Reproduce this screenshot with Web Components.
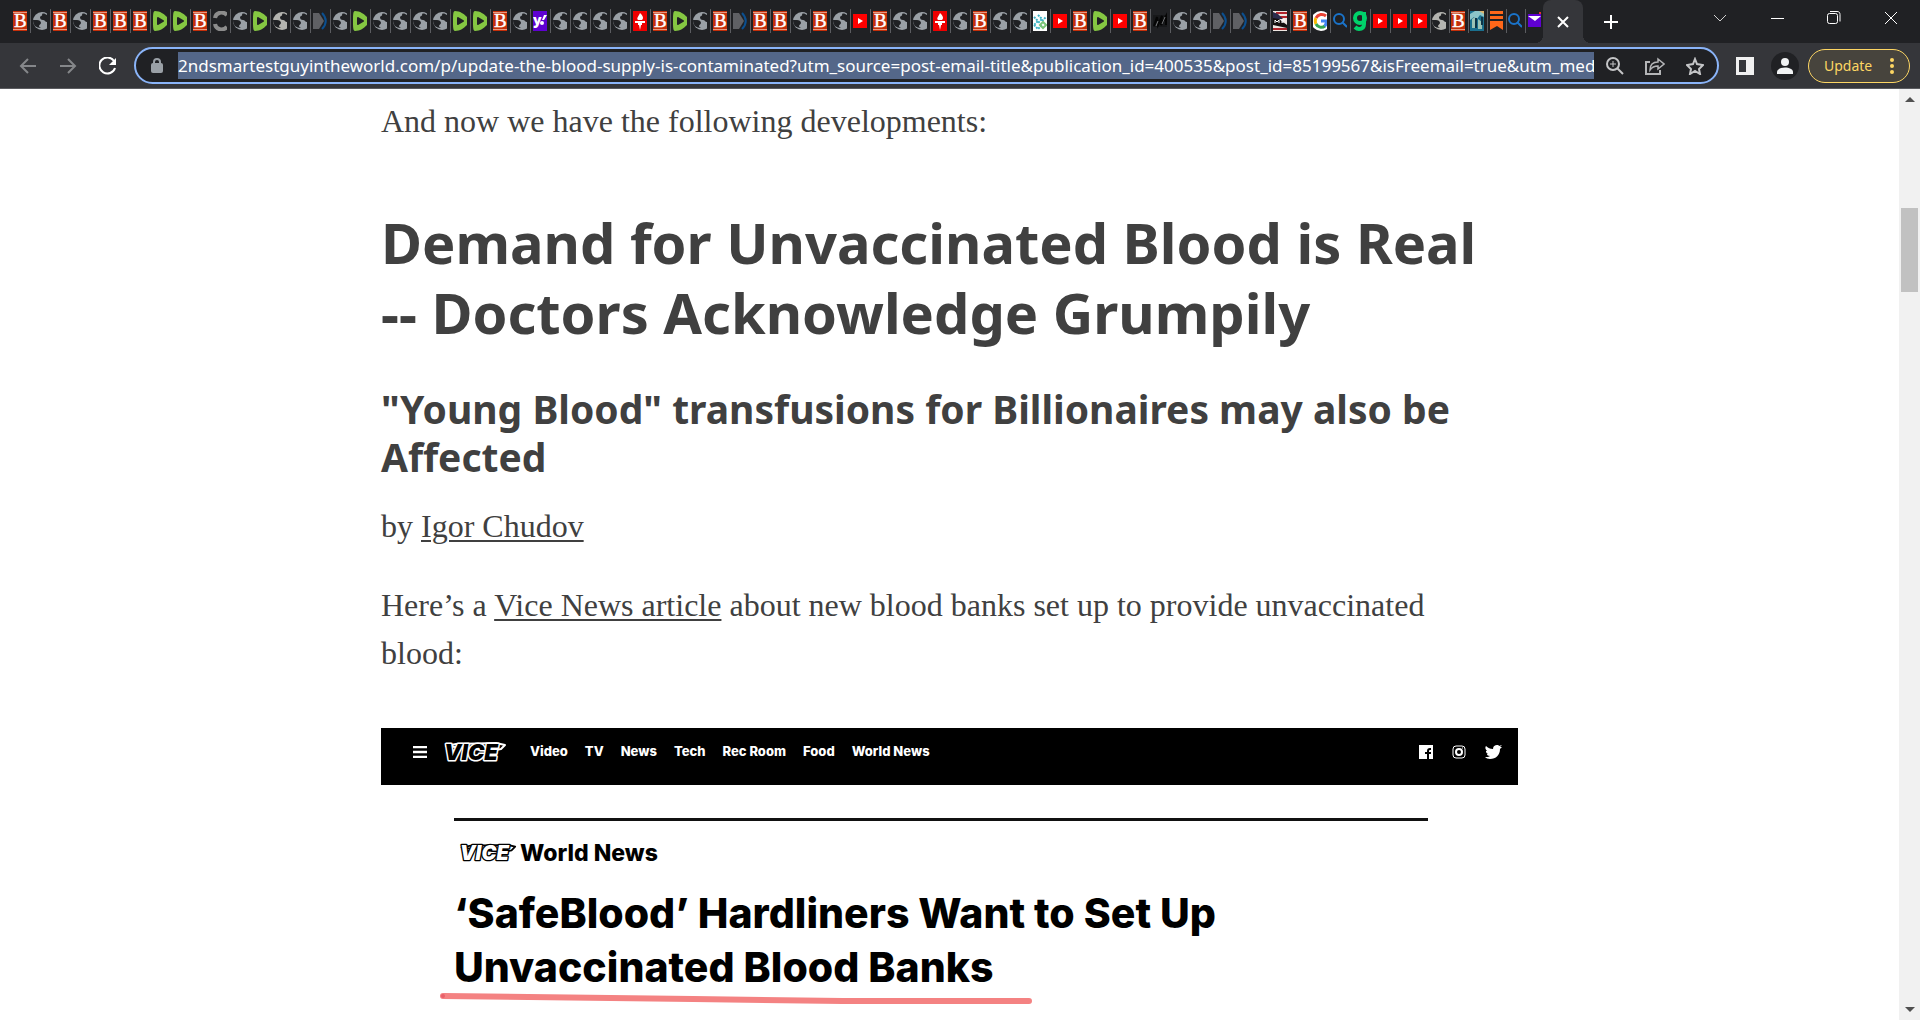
<!DOCTYPE html>
<html lang="en">
<head>
<meta charset="utf-8">
<title>Update: The Blood Supply is Contaminated</title>
<style>
  html, body {
    margin: 0;
    height: 100%;
  }

  body {
    display: flex;
    flex-direction: column;
    overflow: hidden;
    background: #ffffff;
    font-family: 'Noto Sans', sans-serif;
  }

  .viewport {
    display: flex;
    flex: 1;
    min-height: 0;
  }

  .dash {
    white-space: nowrap;
  }
</style>
</head>
<body>
  <tab-strip></tab-strip>
  <nav-toolbar></nav-toolbar>
  <div class="viewport">
    <article-view>
      <p>And now we have the following developments:</p>
      <h1>Demand for Unvaccinated Blood is Real <span class="dash">--</span> Doctors Acknowledge Grumpily</h1>
      <h2>"Young Blood" transfusions for Billionaires may also be Affected</h2>
      <p>by <a href="#igor">Igor Chudov</a></p>
      <p>Here’s a <a href="#vice">Vice News article</a> about new blood banks set up to provide unvaccinated blood:</p>
      <vice-card>‘SafeBlood’ Hardliners Want to Set Up Unvaccinated Blood Banks</vice-card>
    </article-view>
    <page-scrollbar></page-scrollbar>
  </div>

<script>
/**
 * Favicon drawings, all in a 14x20 box since the tabs are too narrow
 * to show the whole icon.
 */
const globe = (color) => `
  <circle cx="9" cy="10" r="9" fill="${color}"/>
  <path d="M0 9h4c2 0 4 1 4 3 0 1-2 2-2 3s1 1 2 2c-5 0-8-3-8-8z" fill="#202124"/>
  <path d="M14 4c-2-1-3-2-5-1 1 2-2 2-2 3 0 2 1 3 3 3s2 2 4 2z" fill="#202124"/>`

const favicons = {
  B: `
    <path d="M0 0h14v20H0z" fill="#c42f0a"/>
    <path d="M0 1.5h14M0 18.5h14" stroke="#e79a80" stroke-width="1"/>
    <text x="1" y="16" font-family="Liberation Serif" font-size="19" fill="#fff" stroke="#fff" stroke-width=".4">B</text>`,
  S: globe('#9aa0a6'),
  L: globe('#b4b4b0'),
  D: `
    <path d="M2 0c5 0 9 3 12 6v8c-3 3-7 6-12 6-2 0-2-4-2-10S0 0 2 0z" fill="#85c742"/>
    <path d="M5 7l5 3-5 3z" fill="#202124" stroke="#202124" stroke-width="2" stroke-linejoin="round"/>`,
  C: `
    <path d="M14 4C10 0 3 1 2 7M14 16c-4 4-11 3-12-3" fill="none" stroke="#8c8c8c" stroke-width="4"/>`,
  P: `
    <path d="M0 2h6l5 8-5 8H0z" fill="#5f6064"/>
    <path d="M9 2c5 5 5 11 0 16" fill="none" stroke="#0b4f8f" stroke-width="2"/>`,
  Y: `
    <path d="M0 0h14v20H0z" fill="#5f01d1"/>
    <text x="0" y="14" font-family="Open Sans" font-weight="800" font-size="14" fill="#fff">y</text>
    <path d="M9 9l2-5h3l-3 5z" fill="#fff"/><circle cx="9" cy="12" r="2" fill="#fff"/>`,
  T: `
    <path d="M0 0h14v20H0z" fill="#ee0000"/>
    <path d="M7 2c3 3 4 5 2 7H5C3 7 6 5 7 2zM2 10h10v2H9v2H5v-2H2zM6 14h2l-1 5z" fill="#fff"/>`,
  V: `
    <rect y="3" width="14" height="14" fill="#ff0000"/>
    <path d="M5 7l5 3-5 3z" fill="#fff"/>`,
  K: `
    <path d="M0 0h14v20H0z" fill="#fff"/>
    <path d="M1 6l4 4-4 4M5 4l4 4-4 4M1 14l4 4 4-4M9 10l4-4" fill="none" stroke="#39b3c6" stroke-width="2" stroke-dasharray="2 1"/>
    <path d="M7 14l3-3 3 3-3 3z" fill="none" stroke="#7cc578" stroke-width="2"/>`,
  M: `
    <path d="M0 4h14v12H0z" fill="#17181a"/>
    <path d="M1 15l3-9 1 8 4-9-1 9 5-9v9" fill="none" stroke="#050505" stroke-width="2"/>
    <path d="M3 15l2-5M9 13l3-7" stroke="#77787a" stroke-width="1"/>`,
  F: `
    <path d="M0 0h14v20H0z" fill="#efe7e2"/>
    <path d="M3 2h11M5 6h9M0 18h14" stroke="#b3252c" stroke-width="2"/>
    <path d="M0 1l5 2 5 5H0z" fill="#2b2c4c"/>
    <path d="M0 7l6 1 8 6v3L0 14z" fill="#15100f"/>
    <path d="M2 12V9l2 2 2-2v3M9 12V9h3M9 11h2" fill="none" stroke="#fff" stroke-width="1"/>`,
  G: `
    <circle cx="8" cy="10" r="10" fill="#fff"/>
    <path d="M13 5a6.5 6.5 0 0 0-10 2" fill="none" stroke="#ea4335" stroke-width="3"/>
    <path d="M3 7a7 7 0 0 0 0 6" fill="none" stroke="#fbbc05" stroke-width="3"/>
    <path d="M3 13a6 6 0 0 0 9 2" fill="none" stroke="#34a853" stroke-width="3"/>
    <path d="M8 10h5.5c0 2-.5 4-2 5" fill="none" stroke="#4285f4" stroke-width="3"/>`,
  Q: `
    <circle cx="6" cy="8" r="5" fill="none" stroke="#1a73c9" stroke-width="2"/>
    <path d="M9 11l5 5" stroke="#1a73c9" stroke-width="2"/>`,
  N: `
    <path d="M11 1v12c0 4-2 5-5 5-2 0-3-1-4-2" fill="none" stroke="#00d26a" stroke-width="4"/>
    <circle cx="7" cy="7" r="5" fill="none" stroke="#00d26a" stroke-width="4"/>`,
  E: `
    <path d="M0 0h14v20H0z" fill="#1a6f8e"/>
    <path d="M0 3l5-3h9v6l-4-2-3 4-3-2-4 3z" fill="#8cc5c8"/>
    <path d="M2 17V8l3-2v11zM8 18V8l4 3v7z" fill="#9cc3b6"/>
    <path d="M6 7v10M12 6v8" stroke="#0c3448" stroke-width="2"/>
    <path d="M9 0h5v3z" fill="#dbb56d"/>`,
  O: `
    <path d="M1 0h13v3H1zM1 5h13v3H1zM1 10h13v9l-6-4-7 4z" fill="#ff6719"/>`,
  H: `
    <path d="M1 3h13v13H1z" fill="#5f01d1"/>
    <path d="M1 5h13l-6 5z" fill="#fff"/>
    <path d="M12 1h2v2h-2z" fill="#e0342f"/>`
}

const openTabs = 'BSBSBBBDDBCSDLSPSDSSSSDDBSYSSSSTBDSBPBBSBSVBSSTSBSSKVBDVBMSSPPSFBGQNVVVLBEOQH'

const iconLabels = {
  B: 'Breitbart', D: 'Rumble', Y: 'Yahoo', V: 'YouTube', G: 'Google', Q: 'Search', H: 'Yahoo Mail', O: 'Substack'
}

const tabStripTemplate = document.createElement('template')
tabStripTemplate.innerHTML = `
  <style>
  :host {
      display: flex;
      align-items: stretch;
      height: 43px;
      padding-left: 11px;
      background: #202124;
  }

  button {
      display: flex;
      align-items: center;
      justify-content: center;
      padding: 0;
      border: 0;
      background: none;
      color: #ffffff;
  }

  #tabs {
      display: flex;
      align-items: center;
      height: 42px;
  }

  .tab {
      box-sizing: border-box;
      justify-content: flex-start;
      width: 20px;
      height: 24px;
      padding-left: 2px;
      border-right: 1px solid #5b5c60;
  }

  .tab.narrow {
      width: 19px;
      padding-left: 1px;
  }

  .tab:last-child {
      width: 17px;
      border-right: 0;
  }

  .tab svg {
      display: block;
      flex: none;
      overflow: hidden;
  }

  #active {
      position: relative;
      width: 40px;
      border-radius: 8px 8px 0 0;
      background: #35363a;
  }

  #active::before, #active::after {
      content: '';
      position: absolute;
      bottom: 0;
      width: 8px;
      height: 8px;
  }

  #active::before {
      right: 100%;
      background: radial-gradient(circle at 0 0, transparent 8px, #35363a 8px);
  }

  #active::after {
      left: 100%;
      background: radial-gradient(circle at 100% 0, transparent 8px, #35363a 8px);
  }

  #newTab {
      width: 56px;
  }

  #controls {
      display: flex;
      height: 36px;
      margin-right: 1px;
      margin-left: auto;
  }

  #controls button {
      width: 57px;
  }
  </style>
  <div id="tabs"></div>
  <button type="button" id="active" aria-label="Close tab">
    <svg width="12" height="12" viewBox="0 0 12 12"><path d="M1 1l10 10M11 1L1 11" stroke="#fff" stroke-width="2"/></svg>
  </button>
  <button type="button" id="newTab" aria-label="New tab">
    <svg width="16" height="16" viewBox="0 0 16 16"><path d="M8 1v14M1 8h14" stroke="#fff" stroke-width="2"/></svg>
  </button>
  <div id="controls">
    <button type="button" aria-label="Search tabs">
      <svg width="14" height="8" viewBox="0 0 14 8"><path d="M1 1l6 6 6-6" fill="none" stroke="#d0d0d0"/></svg>
    </button>
    <button type="button" aria-label="Minimize">
      <svg width="14" height="14" viewBox="0 0 14 14"><path d="M1 7.5h13" stroke="#fff"/></svg>
    </button>
    <button type="button" aria-label="Restore">
      <svg width="14" height="14" viewBox="0 0 14 14" fill="none" stroke="#fff"><rect x=".5" y="2.5" width="10" height="10" rx="2"/><path d="M3 .5h7c2 0 3 1 3 3v7"/></svg>
    </button>
    <button type="button" aria-label="Close">
      <svg width="14" height="14" viewBox="0 0 14 14"><path d="M1 1l12 12M13 1L1 13" stroke="#fff"/></svg>
    </button>
  </div>
`

customElements.define('tab-strip',
  /**
   * The row of tabs and the window buttons.
   */
  class extends HTMLElement {
    constructor () {
      super()

      this.attachShadow({ mode: 'open' })
        .appendChild(tabStripTemplate.content.cloneNode(true))

      this._tabs = this.shadowRoot.querySelector('#tabs')
    }

    connectedCallback () {
      this._renderTabs()
    }

    /**
     * Add one button for each open tab.
     */
    _renderTabs () {
      this._tabs.innerHTML = ''

      for (let i = 0; i < openTabs.length; i++) {
        const key = openTabs[i]
        const tab = document.createElement('button')
        tab.type = 'button'
        tab.className = i > openTabs.length - 7 ? 'tab narrow' : 'tab'
        tab.setAttribute('aria-label', iconLabels[key] || 'Web page')
        tab.innerHTML = `<svg width="14" height="20" viewBox="0 0 14 20">${favicons[key]}</svg>`
        this._tabs.appendChild(tab)
      }
    }
  })

const toolbarTemplate = document.createElement('template')
toolbarTemplate.innerHTML = `
  <style>
  :host {
      display: flex;
      align-items: center;
      height: 45px;
      padding-right: 10px;
      padding-left: 8px;
      background: #35363a;
      border-bottom: 1px solid #5b5c60;
  }

  button {
      display: flex;
      align-items: center;
      justify-content: center;
      flex: none;
      width: 40px;
      height: 34px;
      padding: 0;
      border: 0;
      background: none;
      color: #ffffff;
  }

  #addressBar {
      display: flex;
      align-items: center;
      flex: 1;
      box-sizing: border-box;
      height: 37px;
      min-width: 0;
      margin-right: 11px;
      margin-left: 6px;
      padding-right: 2px;
      border: 2px solid #8ab4f8;
      border-radius: 19px;
      background: #202124;
  }

  #addressBar label {
      display: flex;
      justify-content: center;
      flex: none;
      width: 42px;
  }

  input {
      flex: 1;
      min-width: 0;
      height: 27px;
      box-sizing: border-box;
      margin: 0;
      padding: 0;
      border: 0;
      outline: 0;
      background: #546789;
      color: #ffffff;
      font: 17px 'Noto Sans', sans-serif;
  }

  #icons {
      display: flex;
      margin-left: 1px;
  }

  #panel {
      width: 30px;
  }

  #profile {
      width: 28px;
      height: 28px;
      margin: 0 9px 0 11px;
      border-radius: 14px;
      background: #202124;
  }

  #update {
      box-sizing: border-box;
      width: 102px;
      justify-content: space-between;
      padding: 0 15px;
      border: 1px solid #fdd663;
      border-radius: 17px;
      background: #47443d;
      color: #fdd663;
      font: 14px 'Noto Sans', sans-serif;
  }
  </style>
  <button type="button" aria-label="Back">
    <svg width="18" height="18" viewBox="0 0 18 18" fill="none" stroke="#85878a" stroke-width="2"><path d="M17 9H2M9 2L2 9l7 7"/></svg>
  </button>
  <button type="button" aria-label="Forward">
    <svg width="18" height="18" viewBox="0 0 18 18" fill="none" stroke="#85878a" stroke-width="2"><path d="M1 9h15M9 2l7 7-7 7"/></svg>
  </button>
  <button type="button" aria-label="Reload">
    <svg width="18" height="18" viewBox="0 0 18 18"><path d="M15 4a8 8 0 1 0 1 7" fill="none" stroke="#fff" stroke-width="2"/><path d="M17 1v7h-7z" fill="#fff"/></svg>
  </button>
  <div id="addressBar">
    <label for="url" aria-label="Address">
      <svg width="12" height="15" viewBox="0 0 12 15"><rect y="5" width="12" height="10" rx="2" fill="#9aa0a6"/><path d="M3 6V4a3 3 0 0 1 6 0v2" fill="none" stroke="#9aa0a6" stroke-width="2"/></svg>
    </label>
    <input id="url" type="text" spellcheck="false" value="2ndsmartestguyintheworld.com/p/update-the-blood-supply-is-contaminated?utm_source=post-email-title&amp;publication_id=400535&amp;post_id=85199567&amp;isFreemail=true&amp;utm_medium">
    <div id="icons">
      <button type="button" aria-label="Zoom">
        <svg width="18" height="18" viewBox="0 0 18 18" fill="none" stroke="#c4c5c7" stroke-width="2"><circle cx="7" cy="7" r="6"/><path d="M11 11l6 6"/><path d="M4 7h6M7 4v6" stroke-width="1"/></svg>
      </button>
      <button type="button" aria-label="Share">
        <svg width="20" height="18" viewBox="0 0 20 18" fill="none" stroke="#b4b5b7"><path d="M5 5H1v12h14v-4" stroke-width="2"/><path d="M5 13c0-5 3-8 8-8V2l6 5-6 5V9c-4 0-6 1-8 4z" stroke-width="1.5"/></svg>
      </button>
      <button type="button" aria-label="Bookmark">
        <svg width="18" height="18" viewBox="0 0 18 18" fill="none" stroke="#c4c5c7" stroke-width="2"><path d="M9 2l2 5 6 1-4 4 1 5-5-3-5 3 1-5-4-4 6-1z"/></svg>
      </button>
    </div>
  </div>
  <button type="button" id="panel" aria-label="Side panel">
    <svg width="18" height="18" viewBox="0 0 18 18"><path d="M0 0h18v18H0z" fill="#f1f1f1"/><path d="M3 3h7v12H3z" fill="#35363a"/></svg>
  </button>
  <button type="button" id="profile" aria-label="Profile">
    <svg width="18" height="18" viewBox="0 0 18 18" fill="#f1f3f4"><circle cx="9" cy="5" r="4"/><path d="M1 17v-2c0-6 16-6 16 0v2z"/></svg>
  </button>
  <button type="button" id="update">
    Update
    <svg width="4" height="16" viewBox="0 0 4 16" fill="#fdd663"><circle cx="2" cy="2" r="2"/><circle cx="2" cy="8" r="2"/><circle cx="2" cy="14" r="2"/></svg>
  </button>
`

customElements.define('nav-toolbar',
  /**
   * The toolbar with the address field.
   */
  class extends HTMLElement {
    constructor () {
      super()

      this.attachShadow({ mode: 'open' })
        .appendChild(toolbarTemplate.content.cloneNode(true))
    }
  })

const articleTemplate = document.createElement('template')
articleTemplate.innerHTML = `
  <style>
  :host {
      display: block;
      flex: 1;
      min-width: 0;
      overflow: hidden;
      color: #404040;
  }

  article {
      max-width: 1137px;
      margin: 0 auto;
      padding-top: 8px;
  }

  ::slotted(p) {
      margin: 0 0 31px;
      padding-right: 24px;
      font: 32px/48px 'Liberation Serif', serif;
  }

  ::slotted(h1) {
      margin: 62px 0 38px;
      font: bold 56px/70px 'Noto Sans', sans-serif;
  }

  ::slotted(h2) {
      margin: 0 0 21px;
      font: bold 39px/48px 'Noto Sans', sans-serif;
  }

  ::slotted(vice-card) {
      margin-top: 51px;
  }
  </style>
  <article><slot></slot></article>
`

customElements.define('article-view',
  /**
   * The text column.
   */
  class extends HTMLElement {
    constructor () {
      super()

      this.attachShadow({ mode: 'open' })
        .appendChild(articleTemplate.content.cloneNode(true))

      // Links are slotted deeper than ::slotted can reach.
      this.querySelectorAll('a').forEach(link => {
        link.style.color = 'inherit'
        link.style.textUnderlineOffset = '3px'
        link.style.textDecorationThickness = '2px'
      })
    }
  })

const logoTemplate = document.createElement('template')
logoTemplate.innerHTML = `
  <style>
  :host {
      display: block;
      line-height: 0;
  }

  svg {
      overflow: visible;
  }

  text {
      font: italic 900 22px Inter, sans-serif;
      paint-order: stroke;
  }
  </style>
  <svg width="64" height="22" viewBox="0 0 64 22" stroke-linejoin="round">
    <path d="M4 5l10-2 40-1 9 2-4 4-10 2z" stroke-width="2"/>
    <text x="2" y="19" stroke-width="3">VICE</text>
  </svg>
`

customElements.define('vice-logo',
  /**
   * Logo, white outline on black with the dark attribute.
   */
  class extends HTMLElement {
    constructor () {
      super()

      this.attachShadow({ mode: 'open' })
        .appendChild(logoTemplate.content.cloneNode(true))
    }

    connectedCallback () {
      const dark = this.hasAttribute('dark')
      const svg = this.shadowRoot.querySelector('svg')

      svg.setAttribute('fill', dark ? '#000' : '#fff')
      svg.setAttribute('stroke', dark ? '#fff' : '#000')

      if (!dark) {
        svg.setAttribute('width', '60')
        svg.setAttribute('height', '20')
      }
    }
  })

const viceTemplate = document.createElement('template')
viceTemplate.innerHTML = `
  <style>
  :host {
      display: block;
      color: #000000;
      font-family: Inter, sans-serif;
      font-weight: 800;
  }

  header {
      display: flex;
      align-items: center;
      box-sizing: border-box;
      height: 57px;
      padding: 0 16px 9px 32px;
      background: #000000;
  }

  header vice-logo {
      margin-left: 15px;
  }

  nav {
      display: flex;
      gap: 17px;
      margin: 0 0 3px 24px;
  }

  nav a {
      color: #ffffff;
      font-size: 13px;
      line-height: 16px;
      text-decoration: none;
  }

  button {
      padding: 0;
      border: 0;
      background: none;
      line-height: 0;
  }

  #social {
      display: flex;
      gap: 19px;
      margin-left: auto;
      line-height: 0;
  }

  #story {
      margin: 33px 90px 0 73px;
      border-top: 3px solid #111111;
  }

  #section {
      display: flex;
      align-items: center;
      margin-top: 18px;
      padding-left: 3px;
      font-size: 23px;
      line-height: 28px;
  }

  #section vice-logo {
      margin-right: 3px;
  }

  h3 {
      max-width: 800px;
      margin: 19px 0 0;
      font-size: 41px;
      font-weight: 800;
      line-height: 54px;
  }

  #underline {
      display: block;
      margin: -2px 0 0 -15px;
  }
  </style>
  <header>
    <button type="button" aria-label="Menu">
      <svg width="14" height="12" viewBox="0 0 14 12"><path d="M0 1h14M0 6h14M0 11h14" stroke="#fff" stroke-width="2.4"/></svg>
    </button>
    <vice-logo dark></vice-logo>
    <nav>
      <a href="#video">Video</a>
      <a href="#tv">TV</a>
      <a href="#news">News</a>
      <a href="#tech">Tech</a>
      <a href="#recroom">Rec Room</a>
      <a href="#food">Food</a>
      <a href="#worldnews">World News</a>
    </nav>
    <div id="social">
      <a href="#facebook" aria-label="Facebook">
        <svg width="14" height="14" viewBox="0 0 14 14"><path d="M0 0h14v14H0z" fill="#fff"/><path d="M12 4h-1c-2 0-2 1-2 2v8M6 8h6" fill="none" stroke="#000" stroke-width="2"/></svg>
      </a>
      <a href="#instagram" aria-label="Instagram">
        <svg width="14" height="14" viewBox="0 0 14 14" fill="none" stroke="#fff"><rect x="1" y="1" width="12" height="12" rx="3"/><circle cx="7" cy="7" r="3" stroke-width="2"/><path d="M10 3h1"/></svg>
      </a>
      <a href="#twitter" aria-label="Twitter">
        <svg width="17" height="14" viewBox="0 0 17 14"><path d="M17 2l-2 2c0 6-4 10-10 10-2 0-4-1-5-2 2 0 4 0 5-1-2 0-3-1-3-2h1C1 8 1 7 1 6l1 0C0 4 0 2 1 1c2 2 4 3 7 3 0-3 2-4 4-4 1 0 2 0 2 1l3-1-2 2z" fill="#fff"/></svg>
      </a>
    </div>
  </header>
  <div id="story">
    <div id="section"><vice-logo></vice-logo>World News</div>
    <h3><slot></slot></h3>
    <svg id="underline" width="594" height="14" viewBox="0 0 594 14"><path d="M4 4l250 3 150 2 186 0" fill="none" stroke="#f48282" stroke-width="6" stroke-linecap="round"/><circle cx="4" cy="4" r="2" fill="#e8606a"/></svg>
  </div>
`

customElements.define('vice-card',
  /**
   * The news page inside the article.
   */
  class extends HTMLElement {
    constructor () {
      super()

      this.attachShadow({ mode: 'open' })
        .appendChild(viceTemplate.content.cloneNode(true))
    }
  })

const scrollbarTemplate = document.createElement('template')
scrollbarTemplate.innerHTML = `
  <style>
  :host {
      display: flex;
      flex-direction: column;
      align-items: center;
      width: 21px;
      background: #f1f1f1;
  }

  button {
      height: 21px;
      padding: 0;
      border: 0;
      background: none;
      line-height: 0;
  }

  #track {
      flex: 1;
      width: 17px;
  }

  #thumb {
      height: 84px;
      margin-top: 98px;
      background: #c1c1c1;
  }
  </style>
  <button type="button" aria-label="Scroll up">
    <svg width="10" height="5" viewBox="0 0 10 5"><path d="M0 5l5-5 5 5z" fill="#505050"/></svg>
  </button>
  <div id="track"><div id="thumb"></div></div>
  <button type="button" aria-label="Scroll down">
    <svg width="10" height="5" viewBox="0 0 10 5"><path d="M0 0l5 5 5-5z" fill="#505050"/></svg>
  </button>
`

customElements.define('page-scrollbar',
  /**
   * The scrollbar of the page.
   */
  class extends HTMLElement {
    constructor () {
      super()

      this.attachShadow({ mode: 'open' })
        .appendChild(scrollbarTemplate.content.cloneNode(true))
    }
  })
</script>
</body>
</html>
